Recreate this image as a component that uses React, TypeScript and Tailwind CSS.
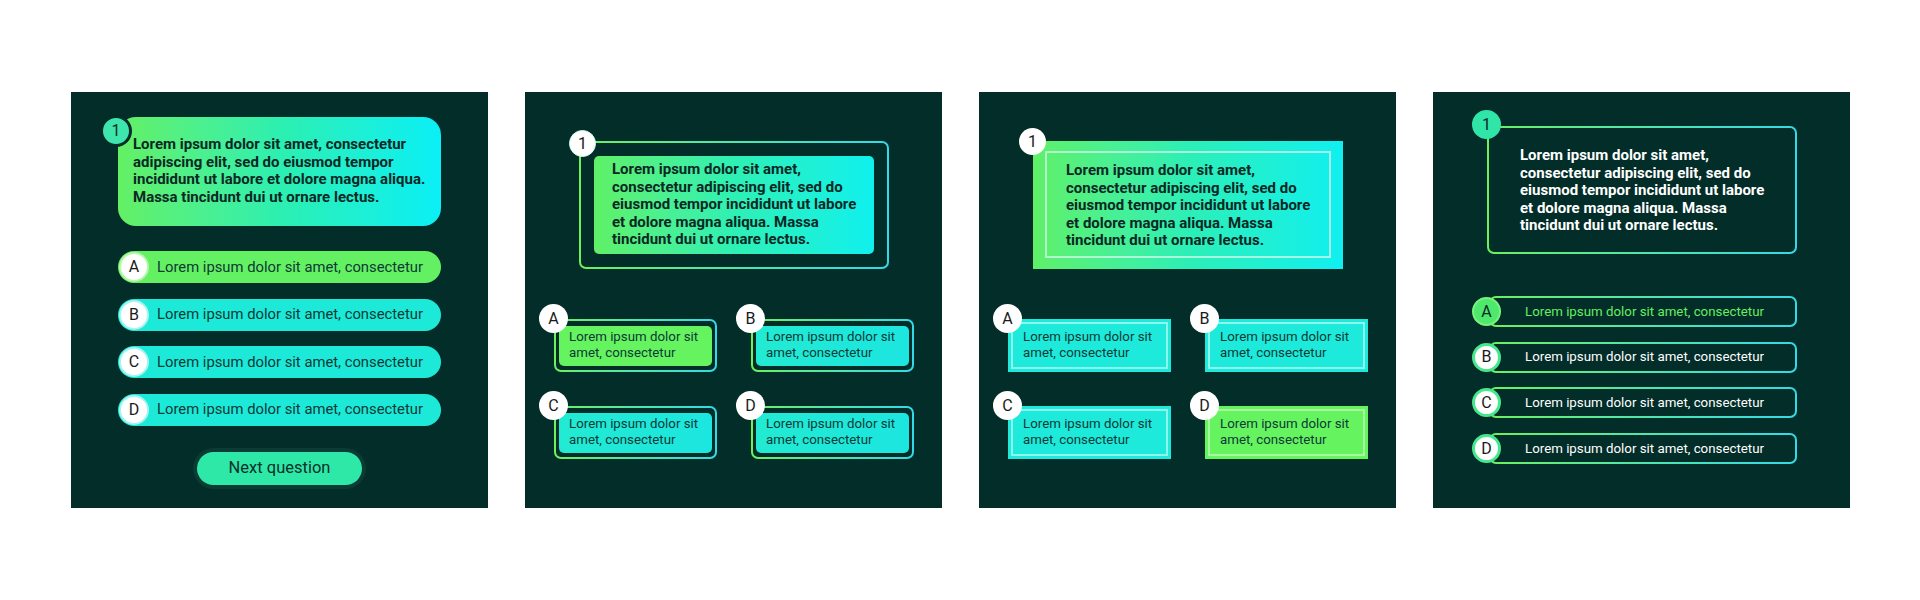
import React from 'react';

const LINES = [
  'Lorem ipsum dolor sit amet,',
  'consectetur adipiscing elit, sed do',
  'eiusmod tempor incididunt ut labore',
  'et dolore magna aliqua. Massa',
  'tincidunt dui ut ornare lectus.',
];

const WIDE_LINES = [
  'Lorem ipsum dolor sit amet, consectetur',
  'adipiscing elit, sed do eiusmod tempor',
  'incididunt ut labore et dolore magna aliqua.',
  'Massa tincidunt dui ut ornare lectus.',
];

const OPTION = 'Lorem ipsum dolor sit amet, consectetur';
const LETTERS = ['A', 'B', 'C', 'D'];

function Lines({ lines }: { lines: string[] }) {
  return (
    <>
      {lines.map((l) => (
        <span key={l} className="block whitespace-nowrap">{l}</span>
      ))}
    </>
  );
}

function PanelOne() {
  return (
    <div className="w-[417px] h-[416px] shrink-0 bg-[#022d28] pt-[25px] pl-[47px] flex flex-col">
      <div className="relative w-[323px] h-[109px] rounded-[18px] bg-linear-to-r from-[#63f063] via-[#2cefb0] to-[#0aeff6] pl-[15px] pt-[19px] text-[15px] leading-[17.5px] font-bold text-[#0a2824]">
        <div className="absolute -left-[18px] -top-[2px] w-[32px] h-[32px] rounded-full border-[3px] border-[#022d28] bg-[#3ee6ad] flex items-center justify-center text-[16px] font-normal text-[#0b2a26]">1</div>
        <Lines lines={WIDE_LINES} />
      </div>
      <div className="mt-[25px] flex flex-col gap-[15.5px]">
        {LETTERS.map((l, i) => (
          <div key={l} className={`w-[323px] h-[32px] rounded-full flex items-center ${i === 0 ? 'bg-[#64f063]' : 'bg-[#1de9d9]'}`}>
            <div className={`ml-[1px] w-[30px] h-[30px] rounded-full bg-white border-2 flex items-center justify-center text-[16px] text-[#1a1a1a] ${i === 0 ? 'border-[#b6f7a8]' : 'border-[#a8f4ee]'}`}>{l}</div>
            <span className="ml-[8px] text-[14.8px] text-[#0c3a35] whitespace-nowrap">{OPTION}</span>
          </div>
        ))}
      </div>
      <div className="w-[323px] mt-[26px] flex justify-center">
        <div className="w-[165px] h-[33px] rounded-full bg-[#2ee8a7] ring-4 ring-[#0a3b34] flex items-center justify-center text-[16.5px] text-[#0b2f2a]">Next question</div>
      </div>
    </div>
  );
}

function PanelTwo() {
  return (
    <div className="w-[417px] h-[416px] shrink-0 bg-[#022d28] pt-[49px] flex flex-col">
      <div className="ml-[54px] relative w-[310px] h-[128px] p-[2px] rounded-[7px] bg-linear-to-r from-[#6cf05c] to-[#33d9e6]">
        <div className="w-full h-full rounded-[5px] bg-[#022d28] p-[13px]">
          <div className="w-full h-full rounded-[5px] bg-linear-to-r from-[#5ff066] via-[#2ef0b4] to-[#0ff0ee] pl-[18px] pt-[5px] text-[15px] leading-[17.5px] font-bold text-[#0a2824]">
            <Lines lines={LINES} />
          </div>
        </div>
        <div className="absolute -left-[10px] -top-[11px] w-[27px] h-[27px] rounded-full bg-white border border-[#cfe] flex items-center justify-center text-[16px] text-[#1a1a1a]">1</div>
      </div>
      <div className="mt-[50px] ml-[29px] grid grid-cols-[163px_163px] gap-x-[34px] gap-y-[34px]">
        {LETTERS.map((l, i) => (
          <div key={l} className="relative w-[163px] h-[53px] p-[2px] rounded-[7px] bg-linear-to-r from-[#6cf05c] to-[#33d9e6]">
            <div className="w-full h-full rounded-[5px] bg-[#022d28] px-[3px] pt-[5px] pb-[4px]">
              <div className={`w-full h-full rounded-[5px] pl-[10px] pt-[3px] text-[13.3px] leading-[15.5px] text-[#0c3a35] ${i === 0 ? 'bg-[#66f360]' : 'bg-linear-to-r from-[#22ead2] to-[#1ce6e0]'}`}>
                <span className="block whitespace-nowrap">Lorem ipsum dolor sit</span>
                <span className="block whitespace-nowrap">amet, consectetur</span>
              </div>
            </div>
            <div className="absolute -left-[15px] -top-[15px] w-[29px] h-[29px] rounded-full bg-white flex items-center justify-center text-[16px] text-[#1a1a1a]">{l}</div>
          </div>
        ))}
      </div>
    </div>
  );
}

function PanelThree() {
  return (
    <div className="w-[417px] h-[416px] shrink-0 bg-[#022d28] pt-[49px] flex flex-col">
      <div className="ml-[54px] relative w-[310px] h-[128px] bg-linear-to-r from-[#5ef067] via-[#2cefb6] to-[#10eff0] pl-[12px] pr-[12px] pt-[10px] pb-[11px]">
        <div className="w-full h-full border-2 border-[#c8f8e6]/80 pl-[19px] pt-[9px] text-[15px] leading-[17.5px] font-bold text-[#0a2824]">
          <Lines lines={LINES} />
        </div>
        <div className="absolute -left-[14px] -top-[13px] w-[27px] h-[27px] rounded-full bg-white flex items-center justify-center text-[16px] text-[#1a1a1a]">1</div>
      </div>
      <div className="mt-[50px] ml-[29px] grid grid-cols-[163px_163px] gap-x-[34px] gap-y-[34px]">
        {LETTERS.map((l, i) => (
          <div key={l} className={`relative w-[163px] h-[53px] p-[3px] ${i === 3 ? 'bg-[#66f360]' : 'bg-[#1deadb]'}`}>
            <div className={`w-full h-full border-2 pl-[10px] pt-[5px] text-[13.3px] leading-[15.5px] text-[#0c3a35] ${i === 3 ? 'border-[#a7f79e]' : 'border-[#8cf5ec]'}`}>
              <span className="block whitespace-nowrap">Lorem ipsum dolor sit</span>
              <span className="block whitespace-nowrap">amet, consectetur</span>
            </div>
            <div className="absolute -left-[15px] -top-[15px] w-[29px] h-[29px] rounded-full bg-white flex items-center justify-center text-[16px] text-[#1a1a1a]">{l}</div>
          </div>
        ))}
      </div>
    </div>
  );
}

function PanelFour() {
  return (
    <div className="w-[417px] h-[416px] shrink-0 bg-[#022d28] pt-[34px] flex flex-col">
      <div className="ml-[54px] relative w-[310px] h-[128px] p-[2px] rounded-[7px] bg-linear-to-r from-[#6cf05c] to-[#33d9e6]">
        <div className="w-full h-full rounded-[5px] bg-[#022d28] pl-[31px] pt-[19px] text-[15px] leading-[17.5px] font-bold text-white">
          <Lines lines={LINES} />
        </div>
        <div className="absolute -left-[15px] -top-[16px] w-[29px] h-[29px] rounded-full bg-[#2fe6a8] flex items-center justify-center text-[16px] text-[#0b2a26]">1</div>
      </div>
      <div className="mt-[42px] ml-[56px] flex flex-col gap-[14.7px]">
        {LETTERS.map((l, i) => (
          <div key={l} className="relative w-[308px] h-[31px] p-[2px] rounded-[7px] bg-linear-to-r from-[#6cf05c] to-[#33d9e6]">
            <div className={`w-full h-full rounded-[5px] bg-[#022d28] pl-[34px] flex items-center text-[13.3px] whitespace-nowrap ${i === 0 ? 'text-[#66ee62]' : 'text-white'}`}>
              {OPTION}
            </div>
            <div className={`absolute -left-[17px] top-[1px] w-[29px] h-[29px] rounded-full flex items-center justify-center text-[16px] ${i === 0 ? 'bg-[#4ee86c] border-2 border-[#7af27c] text-[#0b2a26]' : 'bg-white border-[3px] border-[#46e88e] text-[#1a1a1a]'}`}>{l}</div>
          </div>
        ))}
      </div>
    </div>
  );
}

export default function App() {
  return (
    <div className="w-[1920px] h-[600px] bg-white pt-[92px] pl-[71px] flex gap-[37px]" style={{ fontFamily: 'Roboto, "Liberation Sans", sans-serif' }}>
      <PanelOne />
      <PanelTwo />
      <PanelThree />
      <PanelFour />
    </div>
  );
}
